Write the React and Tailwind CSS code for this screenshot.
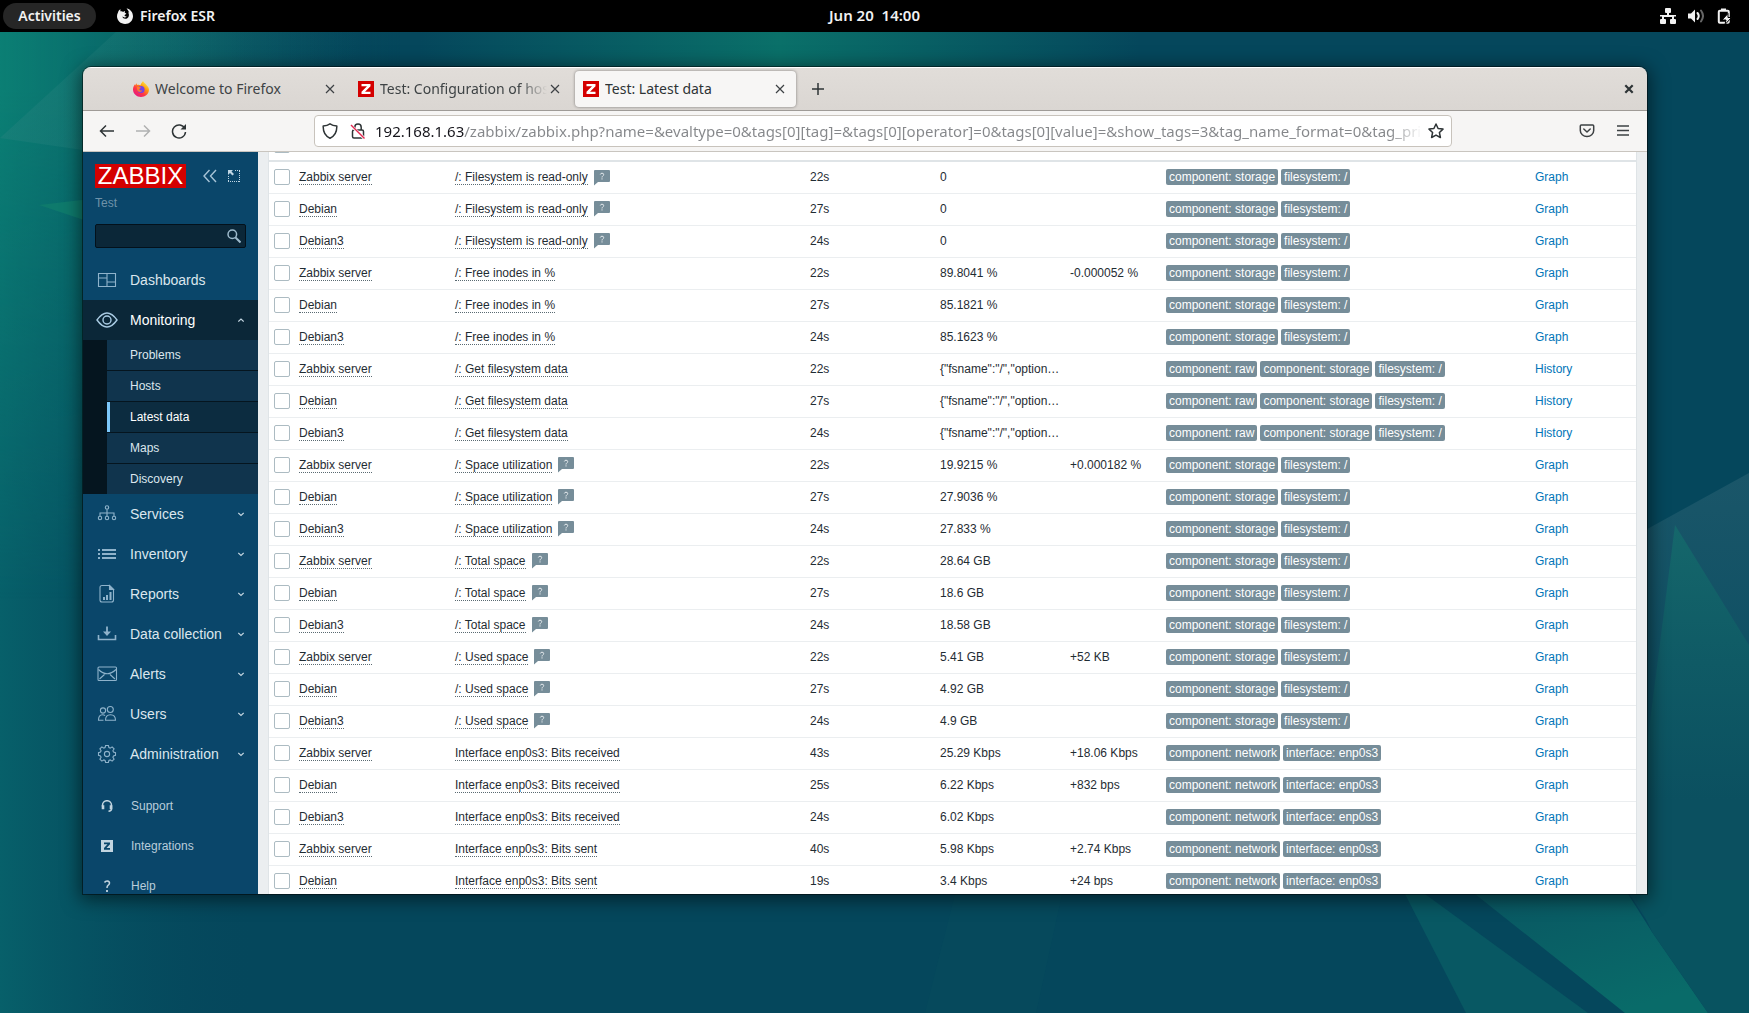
import React from "react";

const uiFont = "font-['Noto_Sans',sans-serif]";
const pageFont = "font-['Liberation_Sans',Arial,sans-serif]";

const storage = ["component: storage", "filesystem: /"];
const raw = ["component: raw", "component: storage", "filesystem: /"];
const network = ["component: network", "interface: enp0s3"];

const groups = [
  {
    name: "/: Filesystem is read-only",
    hint: true,
    tags: storage,
    values: [["22s", "0"], ["27s", "0"], ["24s", "0"]],
  },
  {
    name: "/: Free inodes in %",
    tags: storage,
    values: [["22s", "89.8041 %", "-0.000052 %"], ["27s", "85.1821 %"], ["24s", "85.1623 %"]],
  },
  {
    name: "/: Get filesystem data",
    tags: raw,
    action: "History",
    values: [["22s", '{"fsname":"/","option…'], ["27s", '{"fsname":"/","option…'], ["24s", '{"fsname":"/","option…']],
  },
  {
    name: "/: Space utilization",
    hint: true,
    tags: storage,
    values: [["22s", "19.9215 %", "+0.000182 %"], ["27s", "27.9036 %"], ["24s", "27.833 %"]],
  },
  {
    name: "/: Total space",
    hint: true,
    tags: storage,
    values: [["22s", "28.64 GB"], ["27s", "18.6 GB"], ["24s", "18.58 GB"]],
  },
  {
    name: "/: Used space",
    hint: true,
    tags: storage,
    values: [["22s", "5.41 GB", "+52 KB"], ["27s", "4.92 GB"], ["24s", "4.9 GB"]],
  },
  {
    name: "Interface enp0s3: Bits received",
    tags: network,
    values: [["43s", "25.29 Kbps", "+18.06 Kbps"], ["25s", "6.22 Kbps", "+832 bps"], ["24s", "6.02 Kbps"]],
  },
  {
    name: "Interface enp0s3: Bits sent",
    tags: network,
    values: [["40s", "5.98 Kbps", "+2.74 Kbps"], ["19s", "3.4 Kbps", "+24 bps"]],
  },
];

const hosts = ["Zabbix server", "Debian", "Debian3"];

const rows = groups.flatMap((g) =>
  g.values.map(([age, value, change], i) => ({ ...g, host: hosts[i], age, value, change }))
);

function Wallpaper() {
  return (
    <svg
      className="absolute inset-0 h-full w-full"
      viewBox="0 0 1749 1013"
      preserveAspectRatio="none"
      aria-hidden="true"
    >
      <defs>
        <linearGradient id="left" x1="0" y1="0" x2="1" y2="0">
          <stop offset="0" stopColor="#0b7f74" />
          <stop offset="0.5" stopColor="#086065" stopOpacity="0.8" />
          <stop offset="1" stopColor="#05475c" stopOpacity="0" />
        </linearGradient>
        <linearGradient id="leftFade" x1="0" y1="0" x2="1" y2="0">
          <stop offset="0" stopColor="#07606a" />
          <stop offset="1" stopColor="#05475c" stopOpacity="0" />
        </linearGradient>
        <linearGradient id="down" x1="0" y1="0" x2="0" y2="1">
          <stop offset="0" stopColor="#fff" />
          <stop offset="0.15" stopColor="#fff" />
          <stop offset="1" stopColor="#000" />
        </linearGradient>
        <mask id="fadeDown" maskUnits="userSpaceOnUse" x="0" y="0" width="600" height="1013">
          <rect width="600" height="600" fill="url(#down)" />
        </mask>
        <linearGradient id="ray" x1="0" y1="0" x2="1" y2="0">
          <stop offset="0" stopColor="#2b8480" stopOpacity="0.35" />
          <stop offset="1" stopColor="#2b8480" stopOpacity="0" />
        </linearGradient>
        <linearGradient id="top" x1="0" y1="0" x2="1" y2="0">
          <stop offset="0" stopColor="#0a6f6a" stopOpacity="0" />
          <stop offset="0.5" stopColor="#0a7069" />
          <stop offset="1" stopColor="#0a6f6a" stopOpacity="0" />
        </linearGradient>
        <linearGradient id="spike" x1="0" y1="0" x2="0" y2="1">
          <stop offset="0" stopColor="#15676b" />
          <stop offset="0.5" stopColor="#0f5a65" />
          <stop offset="1" stopColor="#0b5060" />
        </linearGradient>
        <linearGradient id="glass" x1="0" y1="0" x2="0" y2="1">
          <stop offset="0" stopColor="#1a5669" />
          <stop offset="0.5" stopColor="#0b4e62" />
          <stop offset="1" stopColor="#085260" />
        </linearGradient>
        <linearGradient id="beam" x1="0" y1="0" x2="0.6" y2="1">
          <stop offset="0" stopColor="#095662" />
          <stop offset="1" stopColor="#096b69" />
        </linearGradient>
      </defs>
      <rect width="1749" height="1013" fill="#05475c" />
      <rect width="260" height="1013" fill="url(#leftFade)" />
      <rect width="400" height="1013" fill="url(#left)" mask="url(#fadeDown)" />
      <polygon points="116,32 0,138 83,150 360,150 360,32" fill="url(#ray)" />
      <polygon points="39,205 90,199 90,222" fill="#0e7a6c" />
      <rect x="420" y="32" width="720" height="60" fill="url(#top)" />
      <polygon points="955,894 1062,894 1036,1013 925,1013" fill="#0a5560" opacity="0.2" />
      <polygon points="1640,533 1749,473 1749,1013 1708,1013 1620,880" fill="url(#glass)" />
      <polygon points="1675,525 1749,645 1749,800 1640,800" fill="url(#spike)" />
      <polygon points="1640,800 1749,800 1749,880 1640,900" fill="#0b5060" />
      <polygon points="1405,894 1425,894 1588,1013 1466,1013" fill="#085863" />
      <polygon points="1475,894 1628,894 1652,932 1708,1013 1625,1013" fill="url(#beam)" />
      <polygon points="1628,880 1749,880 1749,1013 1708,1013 1652,932" fill="#085360" />
    </svg>
  );
}

function TopBar() {
  return (
    <header className={`relative grid h-8 shrink-0 grid-cols-[1fr_auto_1fr] items-center bg-black text-sm font-semibold text-[#f2f2f2] ${uiFont}`}>
      <div className="flex items-center gap-5 pl-[3px]">
        <button className="h-[26px] w-[93px] rounded-full bg-[#262626] text-center">Activities</button>
        <button className="flex items-center gap-1.5">
          <svg width="18" height="18" viewBox="0 0 18 18" aria-hidden="true">
            <path
              d="M4.6 2.2C4.2 3 4.3 3.8 4.6 4.4 5.4 4.2 6.5 4.3 7.2 4.9 7.6 4.3 8.3 3.9 9 3.9 8.6 4.5 8.5 5.2 8.9 5.7 9.4 6.2 10.2 6.1 10.3 6.6 10.2 7.5 8.7 7.6 8.6 8.4 8.7 9.2 9.8 9.6 10.6 9.2 9.9 10.7 7.6 10.8 6.4 9.6 6.8 11.6 9.2 12.4 11 11.4 13.4 10 13.4 6.9 11.9 5.2 12.5 5.3 12.9 5.5 13.2 5.8 12.8 4.2 11.6 2.9 10.6 1.2 14.4 2.2 17 5.3 17 9.3 17 13.8 13.5 17 9.1 17 4.6 17 1 13.7 1 9.3 1 7.9 1.3 6.6 2 5.4 2.2 4 3.2 2.8 4.6 2.2Z"
              fill="#f2f2f2"
            />
          </svg>
          <span>Firefox ESR</span>
        </button>
      </div>
      <button className="text-[15px] whitespace-pre">{"Jun 20  14:00"}</button>
      <div className="flex items-center justify-end gap-3 pr-[17px]">
        <svg width="16" height="16" viewBox="0 0 16 16" fill="#f2f2f2" role="img" aria-label="Wired network">
          <rect x="5" y="0" width="6" height="5" rx="1" />
          <rect x="0" y="11" width="6" height="5" rx="1" />
          <rect x="10" y="11" width="6" height="5" rx="1" />
          <path d="M7 4h2v3h5v4h-2V9H4v2H2V7h5z" />
          <path d="M0 7h16v1.500H0z" />
        </svg>
        <svg width="16" height="16" viewBox="0 0 16 16" role="img" aria-label="Volume">
          <path d="M0 5.500h3L7 1.500v13l-4-4H0z" fill="#f2f2f2" />
          <path d="M9.500 5q2.500 3 0 6" fill="none" stroke="#f2f2f2" strokeWidth="2" strokeLinecap="round" />
          <path d="M13 2.500q4 5.500 0 11" fill="none" stroke="#666" strokeWidth="2" strokeLinecap="round" />
        </svg>
        <svg width="16" height="16" viewBox="0 0 16 16" role="img" aria-label="Battery">
          <path d="M5 2.200V.5h5v1.700" fill="#f2f2f2" />
          <rect x="2.800" y="2.800" width="10" height="12" rx="1" fill="none" stroke="#f2f2f2" strokeWidth="2" />
          <path d="M12 5.500l-6 6.500h4l-1 4.500 6.500-7h-3.500z" fill="#f2f2f2" stroke="#000" strokeWidth="1" />
        </svg>
      </div>
    </header>
  );
}

function FirefoxIcon() {
  return (
    <svg width="16" height="16" viewBox="0 0 16 16" className="shrink-0" aria-hidden="true">
      <defs>
        <linearGradient id="ffx" x1="0.85" y1="0.05" x2="0.15" y2="0.95">
          <stop offset="0" stopColor="#fff44f" />
          <stop offset="0.35" stopColor="#ff980e" />
          <stop offset="0.65" stopColor="#ff3647" />
          <stop offset="1" stopColor="#e31587" />
        </linearGradient>
      </defs>
      <path d="M10 0c1 2 2.500 2.500 3.500 4C15 5.500 16 7 16 8.800 15.800 13 12.300 16 8 16S0 12.700 0 8.500C0 6.500.8 4.600 1.800 3.200L2 4.600 3.500 2.200 4 4c1.500-.6 2.800-.3 3.500.3C8 2.500 9 1.500 10 0Z" fill="url(#ffx)" />
      <circle cx="8" cy="8.500" r="3.600" fill="#7542e5" />
      <path d="M4 6.200c1.500-.8 2.800 0 4 .4-.3 1-1.800 1.200-1.700 2 .5 1.400 2.200 1 3 .6-.5 1.800-3 2.300-4.500.8C4.200 9 3.800 7.600 4 6.200Z" fill="#ff7a2a" />
    </svg>
  );
}

function ZIcon() {
  return (
    <svg width="16" height="16" viewBox="0 0 16 16" className="shrink-0" aria-hidden="true">
      <rect width="16" height="16" fill="#d40000" />
      <path d="M3.500 3h9v2.200L7 10.700h5.500V13h-9v-2.200L9 5.300H3.500z" fill="#fff" />
    </svg>
  );
}

function CloseGlyph() {
  return (
    <svg width="16" height="16" viewBox="0 0 16 16" fill="none" stroke="#3d4144" strokeWidth="1.2" aria-hidden="true">
      <path d="M4 4l8 8M12 4l-8 8" />
    </svg>
  );
}

function Tab({ icon, title, active, fade }) {
  return (
    <div
      className={`mx-0.5 flex h-9 w-[221px] items-center rounded-[4px] pl-2 pr-2 ${
        active ? "bg-[#f7f6f5] shadow-[0_0_3px_rgba(0,0,0,0.45)]" : ""
      }`}
    >
      {icon}
      <button
        className={`ml-1.5 h-6 min-w-0 flex-1 overflow-hidden text-left text-sm whitespace-nowrap ${
          fade ? "[mask-image:linear-gradient(to_left,transparent,black_28px)]" : ""
        } ${active ? "text-[#2e3436]" : "text-[#3e4345]"}`}
      >
        {title}
      </button>
      <button aria-label={`Close ${title}`} className="shrink-0">
        <CloseGlyph />
      </button>
    </div>
  );
}

function Chrome() {
  return (
    <div className={`shrink-0 text-[15px] ${uiFont}`}>
      <div className="flex h-11 items-center border-t border-b border-t-white border-b-[#9f9b97] bg-linear-to-b from-[#e1ddd9] to-[#dad6d2] pl-10 pr-2.5">
        <Tab icon={<FirefoxIcon />} title="Welcome to Firefox" />
        <Tab icon={<ZIcon />} title="Test: Configuration of hosts" fade />
        <Tab icon={<ZIcon />} title="Test: Latest data" active />
        <button aria-label="New tab" className="ml-3">
          <svg width="16" height="16" viewBox="0 0 16 16" stroke="#2e3436" strokeWidth="1.5" aria-hidden="true">
            <path d="M2 8h12M8 2v12" />
          </svg>
        </button>
        <button aria-label="Close window" className="ml-auto">
          <svg width="16" height="16" viewBox="0 0 16 16" stroke="#2e3436" strokeWidth="2.200" aria-hidden="true">
            <path d="M4.300 4.300l7.400 7.400M11.700 4.300l-7.400 7.400" />
          </svg>
        </button>
      </div>
      <div className="flex h-[41px] items-center border-b border-[#c9c5bf] bg-[#f6f5f4] px-1.5">
        <button aria-label="Back" className="grid w-9 place-items-center">
          <svg width="16" height="16" viewBox="0 0 16 16" fill="none" stroke="#2e3436" strokeWidth="1.500" aria-hidden="true">
            <path d="M15 8H1.500M7 2.500L1.500 8 7 13.500" />
          </svg>
        </button>
        <button aria-label="Forward" className="grid w-9 place-items-center">
          <svg width="16" height="16" viewBox="0 0 16 16" fill="none" stroke="#b0b1b1" strokeWidth="1.500" aria-hidden="true">
            <path d="M1 8h13.500M9 2.500L14.500 8 9 13.500" />
          </svg>
        </button>
        <button aria-label="Reload" className="grid w-9 place-items-center">
          <svg width="16" height="16" viewBox="0 0 16 16" fill="none" stroke="#2e3436" strokeWidth="1.500" aria-hidden="true">
            <path d="M13.800 5.500A6.500 6.500 0 1 0 14.500 9" />
            <path d="M15 1v5.500H9.500z" fill="#2e3436" stroke="none" />
          </svg>
        </button>
        <form className="mx-[117px] flex h-8 min-w-0 flex-1 items-center rounded-[4px] border border-[#c8c3bc] bg-white pl-[7px] pr-[7px]">
          <svg width="16" height="16" viewBox="0 0 16 16" fill="none" stroke="#2e3436" strokeWidth="1.500" aria-hidden="true">
            <path d="M8 .8c2 1.400 4.300 2 6.800 2.200.2 5.500-1.800 10-6.800 12.200C3 13 1 8.500 1.200 3 3.700 2.800 6 2.200 8 .8Z" strokeLinejoin="round" />
          </svg>
          <svg className="ml-3" width="16" height="16" viewBox="0 0 16 16" fill="none" stroke="#2e3436" strokeWidth="1.500" aria-hidden="true">
            <rect x="2.500" y="7" width="11" height="8" rx="1.500" />
            <path d="M4.800 7V4.300a3.200 3.200 0 0 1 6.400 0V7" />
            <path d="M1 2.500l13.500 13" stroke="#fff" strokeWidth="3" />
            <path d="M1 2l13.500 13.500" stroke="#e22850" strokeWidth="1.400" />
          </svg>
          <input
            aria-label="Address"
            className="ml-[9px] h-full min-w-0 flex-1 bg-[linear-gradient(to_right,#15141a_89px,#85878a_89px,#85878a_calc(100%-32px),transparent)] bg-clip-text text-transparent outline-none"
            defaultValue="192.168.1.63/zabbix/zabbix.php?name=&evaltype=0&tags[0][tag]=&tags[0][operator]=0&tags[0][value]=&show_tags=3&tag_name_format=0&tag_priority="
          />
          <button type="button" aria-label="Bookmark this page" className="ml-1.5">
            <svg width="16" height="16" viewBox="0 0 16 16" fill="none" stroke="#2e3436" strokeWidth="1.500" strokeLinejoin="round" aria-hidden="true">
              <path d="M8 1l2.100 4.500 4.900.6-3.600 3.400 1 5L8 12.100 3.600 14.500l1-5L1 6.100l4.900-.6z" />
            </svg>
          </button>
        </form>
        <button aria-label="Save to Pocket" className="grid w-9 place-items-center">
          <svg width="16" height="16" viewBox="0 0 16 16" fill="none" stroke="#3d4143" strokeWidth="1.500" strokeLinecap="round" strokeLinejoin="round" aria-hidden="true">
            <path d="M2.300 2h11.400q1 0 1 1v4.500a6.700 6 0 0 1-13.400 0V3q0-1 1-1z" />
            <path d="M4.800 6l3.200 3 3.200-3" />
          </svg>
        </button>
        <button aria-label="Menu" className="grid w-9 place-items-center">
          <svg width="16" height="16" viewBox="0 0 16 16" stroke="#3d4143" strokeWidth="1.300" aria-hidden="true">
            <path d="M2 3h12M2 7.500h12M2 12h12" />
          </svg>
        </button>
      </div>
    </div>
  );
}

const icons = {
  dashboards: <path d="M3.500 5.500h17v13h-17zM12 5.500v13M3.500 10h8.500M12 14h8.500" />,
  monitoring: (
    <g stroke="#a9cbe3" strokeWidth="1.400">
      <path d="M2 12q10-14 20 0q-10 14-20 0z" />
      <circle cx="12" cy="12" r="4" />
    </g>
  ),
  services: (
    <>
      <circle cx="12" cy="5.500" r="1.700" />
      <circle cx="5" cy="16" r="1.700" />
      <circle cx="12" cy="16" r="1.700" />
      <circle cx="19" cy="16" r="1.700" />
      <path d="M12 7.500v6.500M5 14v-3h14v3" />
    </>
  ),
  inventory: <path d="M3 8h2M3 12h2M3 16h2M7 8h14M7 12h14M7 16h14" strokeWidth="1.800" />,
  reports: (
    <>
      <path d="M7 3.500h7.500l4 4v10.500q0 2-2 2h-9.500q-2 0-2-2v-12.500q0-2 2-2z" />
      <path d="M14.500 3.500v4h4z" fill="#8fb3cb" />
      <path d="M9 18v-3M12 18v-5M15.500 18v-8" strokeWidth="2" />
    </>
  ),
  collection: (
    <>
      <path d="M3.500 13v4.500h17V13" strokeWidth="1.600" />
      <path d="M12 4.500v6" strokeWidth="1.800" />
      <path d="M8 9.500h8L12 14z" fill="#8fb3cb" stroke="none" />
    </>
  ),
  alerts: (
    <>
      <rect x="3" y="5" width="18.500" height="13.500" rx="1" />
      <path d="M3.500 7.500q8.500 8.500 17.500 0M4.500 17l5-4.500M20 17l-5-4.500" />
    </>
  ),
  users: (
    <>
      <circle cx="8" cy="8.500" r="2.600" />
      <circle cx="15.300" cy="7.500" r="3" />
      <path d="M10.500 18.300q0-5.500 5-5.500t5 5.500zM8.500 18.300H3.500q0-5.500 4-5.500 1.800 0 2.500 1" />
    </>
  ),
  administration: (
    <>
      <circle cx="12" cy="12" r="2.600" />
      <path d="M10.600 4.500h2.800l.5 2 1.300.6 1.900-1.200 2 2-1.200 1.900.6 1.300 2 .5v2.800l-2 .5-.6 1.300 1.200 1.900-2 2-1.900-1.200-1.300.6-.5 2h-2.800l-.5-2-1.300-.6-1.900 1.200-2-2 1.200-1.900-.6-1.300-2-.5v-2.800l2-.5.6-1.300-1.200-1.900 2-2 1.900 1.200 1.300-.6z" transform="translate(0 -1)" />
    </>
  ),
};

function MenuIcon({ name }) {
  return (
    <svg width="24" height="24" viewBox="0 0 24 24" fill="none" stroke="#8fb3cb" strokeWidth="1.100" className="shrink-0" aria-hidden="true">
      {icons[name]}
    </svg>
  );
}

function MenuItem({ icon, label, open, plain }) {
  return (
    <button
      className={`flex h-10 w-full items-center gap-[11px] pl-3 pr-3.5 text-left text-sm ${
        open ? "bg-[#0b2738] text-white" : "text-[#dce7ee]"
      }`}
    >
      <MenuIcon name={icon} />
      <span className="flex-1">{label}</span>
      {!plain && (
        <svg width="6" height="6" viewBox="0 0 6 6" fill="none" stroke="#c3d5e0" strokeWidth="1.200" aria-hidden="true">
          <path d={open ? "M.3 4.500L3 2l2.700 2.500" : "M.3 2L3 4.500 5.700 2"} />
        </svg>
      )}
    </button>
  );
}

const footerIcons = {
  Support: (
    <g fill="none" stroke="#c3d5e0">
      <path d="M1.500 6.500V5.200a4.500 4.500 0 0 1 9 0V9q0 2-3 2.200" strokeWidth="1.500" />
      <path d="M2 5.200v4M10 5.200v4" strokeWidth="2.600" />
    </g>
  ),
  Integrations: (
    <>
      <rect width="12" height="12" fill="#c3d5e0" />
      <path d="M3 2.500h6v1.700L5.500 8H9v1.700H3V8l3.500-3.800H3z" fill="#0a466a" />
    </>
  ),
  Help: (
    <g fill="none" stroke="#c3d5e0" strokeWidth="1.500">
      <path d="M3.500 2.500Q4.500.8 6.300.9q2.300.2 2.200 2.200Q8.400 4.500 7 5.300 6 6 6 8" />
      <path d="M6 10v2" strokeWidth="1.800" />
    </g>
  ),
};

function Sidebar() {
  return (
    <aside className={`w-[175px] shrink-0 overflow-hidden bg-[#0a466a] pt-3 ${pageFont}`}>
      <div className="flex items-center pl-3 pr-[18px]">
        <a href="#home" className="flex h-6 w-[91px] items-center justify-center bg-[#d40000] text-2xl leading-6 text-white">
          ZABBIX
        </a>
        <button aria-label="Hide sidebar" className="ml-auto">
          <svg width="14" height="14" viewBox="0 0 14 14" fill="none" stroke="#a6c3d6" strokeWidth="1.400" aria-hidden="true">
            <path d="M6.500 1L1 7l5.500 6M13 1L7.500 7 13 13" />
          </svg>
        </button>
        <button aria-label="Kiosk mode" className="ml-[11px]">
          <svg width="12" height="12" viewBox="0 0 12 12" fill="none" stroke="#c0d6e4" aria-hidden="true">
            <path d="M7 .5h5M11.500 1v11M11 11.500H0M.5 11V6" strokeDasharray="1 1" />
            <path d="M0 0h5L3.500 1.500 6 4 4.500 5.500 2 3 0 5z" fill="#c0d6e4" stroke="none" />
          </svg>
        </button>
      </div>
      <div className="mt-[7px] pl-3 text-xs leading-4 text-[#6f92a9]">Test</div>
      <form className="mx-3 mt-[13px] flex h-6 items-center rounded-[2px] border border-[#03111b] bg-[#0b2738] pr-1">
        <input type="search" aria-label="Search" className="h-full min-w-0 flex-1 bg-transparent px-1 text-xs text-white outline-none" />
        <button type="button" aria-label="Search">
          <svg width="14" height="14" viewBox="0 0 14 14" fill="none" stroke="#9dbacc" aria-hidden="true">
            <circle cx="5.300" cy="5.300" r="4.300" strokeWidth="1.500" />
            <path d="M8.500 8.500l5 5" strokeWidth="2" />
          </svg>
        </button>
      </form>
      <nav className="mt-3">
        <MenuItem icon="dashboards" label="Dashboards" plain />
        <MenuItem icon="monitoring" label="Monitoring" open />
        <div className="bg-[#05151f] pl-6">
          <ul className="divide-y divide-[#05151f] text-xs">
            {["Problems", "Hosts", "Latest data", "Maps", "Discovery"].map((label) => (
              <li key={label}>
                <a
                  href={`#${label.toLowerCase().replace(" ", "-")}`}
                  className={`flex h-[30px] items-center border-l-3 pl-5 ${
                    label === "Latest data"
                      ? "border-[#7cc8fb] bg-[#0c2c40] text-white"
                      : "border-[#10344d] bg-[#10344d] text-[#dce7ee]"
                  }`}
                >
                  {label}
                </a>
              </li>
            ))}
          </ul>
        </div>
        <MenuItem icon="services" label="Services" />
        <MenuItem icon="inventory" label="Inventory" />
        <MenuItem icon="reports" label="Reports" />
        <MenuItem icon="collection" label="Data collection" />
        <MenuItem icon="alerts" label="Alerts" />
        <MenuItem icon="users" label="Users" />
        <MenuItem icon="administration" label="Administration" />
      </nav>
      <nav className="mt-3 text-xs text-[#b9cddb]">
        {["Support", "Integrations", "Help"].map((label) => (
          <a key={label} href={`#${label.toLowerCase()}`} className="flex h-10 items-center gap-[18px] pl-[18px]">
            <svg width="12" height="12" viewBox="0 0 12 12" aria-hidden="true">
              {footerIcons[label]}
            </svg>
            {label}
          </a>
        ))}
      </nav>
    </aside>
  );
}

function HintIcon() {
  return (
    <button aria-label="Description" className="ml-1.5 h-4 align-middle">
      <svg width="16" height="16" viewBox="0 0 16 16" className="block" aria-hidden="true">
        <path d="M1 0h14q1 0 1 1v10q0 1-1 1H4L0 15.500V1q0-1 1-1z" fill="#768d99" />
        <path d="M6.300 4.500Q6.700 3.200 8 3.200q1.700 0 1.700 1.500Q9.700 5.500 8.700 6.100 8 6.500 8 7.500M8 8.300v1.200" fill="none" stroke="#e6ebee" />
      </svg>
    </button>
  );
}

function Check({ label }) {
  return (
    <input
      type="checkbox"
      aria-label={label}
      className="block h-4 w-4 appearance-none rounded-[2px] border border-[#acbbc2] bg-white"
    />
  );
}

const dotted = "border-b border-dotted border-[#5a6a72]";

function DataTable() {
  return (
    <main className={`min-w-0 flex-1 overflow-hidden bg-[#ebeef0] pl-2.5 pr-2.5 ${pageFont}`}>
      <div className="-mt-[23px] border-x border-[#dfe4e7] bg-white">
        <table className="w-full table-fixed text-left text-xs text-[#1f2c33]">
          <colgroup>
            <col className="w-[25px]" />
            <col className="w-[156px]" />
            <col />
            <col className="w-[130px]" />
            <col className="w-[130px]" />
            <col className="w-24" />
            <col className="w-[369px]" />
            <col className="w-[106px]" />
          </colgroup>
          <thead>
            <tr className="h-8 border-b-2 border-[#dfe4e7] text-[#768d99]">
              <th className="pl-[5px]">
                <Check label="Select all" />
              </th>
              {["Host", "Name", "Last check", "Last value", "Change", "Tags"].map((h) => (
                <th key={h} className="px-[5px] font-normal">{h}</th>
              ))}
              <th aria-label="Actions" />
            </tr>
          </thead>
          <tbody>
            {rows.map((r) => (
              <tr key={r.name + r.host} className="h-8 border-b border-[#ebeef0] whitespace-nowrap">
                <td className="pl-[5px]">
                  <Check label={`${r.host} ${r.name}`} />
                </td>
                <td className="px-[5px]">
                  <a href="#host" className={dotted}>{r.host}</a>
                </td>
                <td className="px-[5px]">
                  <a href="#item" className={dotted}>{r.name}</a>
                  {r.hint && <HintIcon />}
                </td>
                <td className="px-[5px]">{r.age}</td>
                <td className="px-[5px]">{r.value}</td>
                <td className="px-[5px]">{r.change}</td>
                <td className="px-[5px]">
                  <div className="flex gap-[3px]">
                    {r.tags.map((t) => (
                      <span key={t} className="h-4 rounded-[2px] bg-[#768d99] px-[3px] leading-4 text-white">{t}</span>
                    ))}
                  </div>
                </td>
                <td className="px-[5px]">
                  <a href="#graph" className="text-[#0275b8]">{r.action || "Graph"}</a>
                </td>
              </tr>
            ))}
          </tbody>
        </table>
      </div>
    </main>
  );
}

export default function App() {
  return (
    <div className="relative flex h-screen flex-col overflow-hidden">
      <Wallpaper />
      <TopBar />
      <div className="relative flex min-h-0 flex-1 pt-[35px] pr-[102px] pb-[119px] pl-[83px]">
        <section className="flex min-w-0 flex-1 flex-col overflow-hidden rounded-t-lg shadow-[0_0_0_1px_rgba(0,0,0,0.45),0_3px_18px_3px_rgba(0,0,0,0.5)]">
          <Chrome />
          <div className="flex min-h-0 flex-1">
            <Sidebar />
            <DataTable />
          </div>
        </section>
      </div>
    </div>
  );
}
